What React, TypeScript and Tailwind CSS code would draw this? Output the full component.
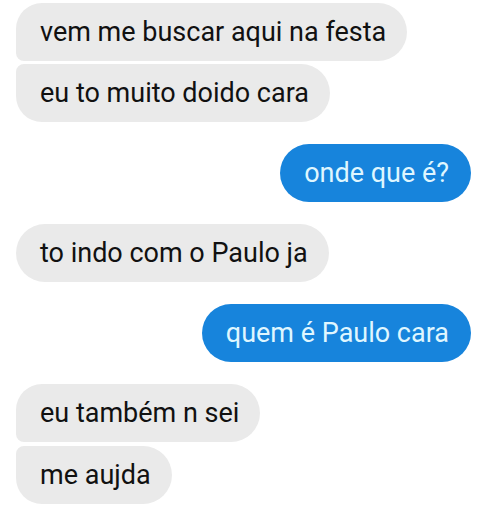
import React from "react";

const font = { fontFamily: "Roboto, 'Noto Sans', sans-serif" };

function Gray({ text, cls }: { text: string; cls: string }) {
  return (
    <div className="flex justify-start">
      <div
        className={`bg-[#eaeaea] text-[#111111] text-[27px] leading-[30px] h-[58px] flex items-center pl-[24px] pr-[21px] ${cls}`}
      >
        {text}
      </div>
    </div>
  );
}

function Blue({ text }: { text: string }) {
  return (
    <div className="flex justify-end">
      <div className="bg-[#1784dc] text-[#dff6ff] text-[27px] leading-[30px] h-[58px] flex items-center pl-[24px] pr-[22px] rounded-[29px]">
        {text}
      </div>
    </div>
  );
}

export default function App() {
  return (
    <div
      className="w-[480px] h-[508px] bg-white overflow-hidden pt-[3px] pl-[16px] pr-[9px] flex flex-col"
      style={font}
    >
      <Gray text="vem me buscar aqui na festa" cls="rounded-r-[29px] rounded-tl-[26px] rounded-bl-[8px]" />
      <div className="h-[3px]" />
      <Gray text="eu to muito doido cara" cls="rounded-r-[29px] rounded-tl-[8px] rounded-bl-[26px]" />
      <div className="h-[22px]" />
      <Blue text="onde que é?" />
      <div className="h-[22px]" />
      <Gray text="to indo com o Paulo ja" cls="rounded-[29px]" />
      <div className="h-[22px]" />
      <Blue text="quem é Paulo cara" />
      <div className="h-[22px]" />
      <Gray text="eu também n sei" cls="rounded-r-[29px] rounded-tl-[26px] rounded-bl-[8px]" />
      <div className="h-[4px]" />
      <Gray text="me aujda" cls="rounded-r-[29px] rounded-tl-[8px] rounded-bl-[26px]" />
    </div>
  );
}
